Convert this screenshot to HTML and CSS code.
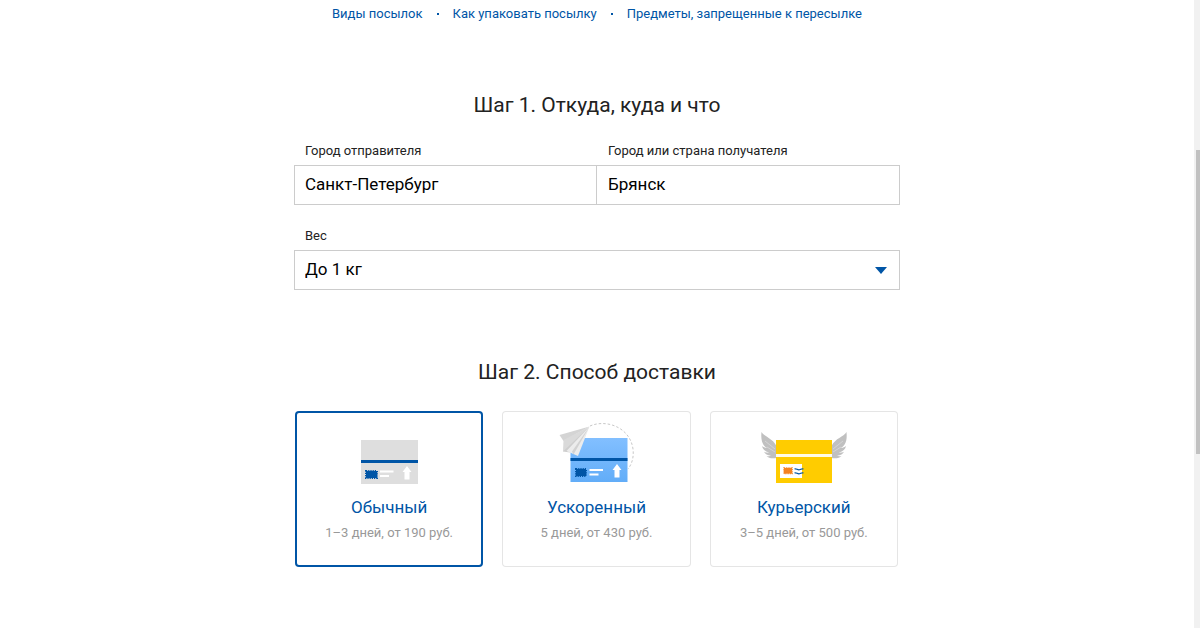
FILE: index.html
```html
<!DOCTYPE html>
<html lang="ru">
<head>
    <meta charset="UTF-8">
    <meta name="viewport" content="width=device-width, initial-scale=1.0">
    <title>Отправить посылку</title>
    <link rel="stylesheet" href="styles.css">
</head>
<body>
    <div class="page">
        <nav class="links">
            <a href="#types">Виды посылок</a>
            <span class="dot"></span>
            <a href="#packing">Как упаковать посылку</a>
            <span class="dot"></span>
            <a href="#forbidden">Предметы, запрещенные к пересылке</a>
        </nav>

        <form class="container">
            <h2>Шаг 1. Откуда, куда и что</h2>
            <div class="cities">
                <div class="field">
                    <label for="from">Город отправителя</label>
                    <input type="text" id="from" value="Санкт-Петербург">
                </div>
                <div class="field">
                    <label for="to">Город или страна получателя</label>
                    <input type="text" id="to" value="Брянск">
                </div>
            </div>
            <div class="field weight">
                <label for="weight">Вес</label>
                <div class="select-wrap">
                    <select id="weight">
                        <option>До 1 кг</option>
                    </select>
                    <svg class="caret" viewBox="0 0 12 7" width="12" height="7"><path d="M0 0h12L6 7z" fill="#0055a6"/></svg>
                </div>
            </div>

            <h2>Шаг 2. Способ доставки</h2>
            <div class="methods">
                <label class="method">
                    <input type="radio" name="method" checked>
                    <svg class="method-icon" viewBox="0 0 96 66">
                        <rect x="20" y="20" width="57" height="44" fill="#dedede"/>
                        <rect x="20" y="40" width="57" height="3" fill="#0055a6"/>
                        <rect x="25" y="51" width="11" height="7" fill="#0055a6"/>
                        <rect x="25" y="51" width="11" height="7" fill="none" stroke="#0055a6" stroke-width="2" stroke-dasharray="1.2 1"/>
                        <path d="M39 50.5h13.500v2H39zM39 55h9v2h-9z" fill="#fff"/>
                        <path d="M66 46l4.500 6H68.500v7.500h-5V52h-2z" fill="#fff"/>
                    </svg>
                    <span class="method-name">Обычный</span>
                    <span class="method-info">1–3 дней, от 190 руб.</span>
                </label>
                <label class="method">
                    <input type="radio" name="method">
                    <svg class="method-icon" viewBox="0 0 96 66">
                        <defs>
                            <linearGradient id="box" x1="0" y1="0" x2="0" y2="1">
                                <stop offset="0" stop-color="#82bfff"/>
                                <stop offset="1" stop-color="#62adf8"/>
                            </linearGradient>
                        </defs>
                        <path d="M42 6C58-1 82 7 85 29c1 8-1 15-5 20" fill="none" stroke="#c8c8c8" stroke-width="1" stroke-dasharray="2.500 2"/>
                        <rect x="22.500" y="18" width="57" height="44" fill="url(#box)"/>
                        <rect x="22.500" y="38" width="57" height="3" fill="#0055a6"/>
                        <rect x="28" y="49" width="10" height="7" fill="#0055a6"/>
                        <rect x="28" y="49" width="10" height="7" fill="none" stroke="#0055a6" stroke-width="2" stroke-dasharray="1.2 1"/>
                        <path d="M41.500 49H55v2H41.500zM41.500 53.500h9v2h-9z" fill="#fff"/>
                        <path d="M69 44l4.500 6h-2v7.500h-5V50h-2z" fill="#fff"/>
                        <path d="M41.500 6.500L11.500 15l4 6z" fill="#d4d4d4"/>
                        <path d="M41.500 6.500L15.500 20l-.5 11.500 7-1.500z" fill="#dadada"/>
                        <path d="M41.500 6.500L15 31.500l7 1z" fill="#cecece"/>
                        <path d="M41.500 6.500L18.500 31 30 36z" fill="#ececec"/>
                        <path d="M41.500 6.500L24 31.500l1.500 3z" fill="#d2d2d2"/>
                    </svg>
                    <span class="method-name">Ускоренный</span>
                    <span class="method-info">5 дней, от 430 руб.</span>
                </label>
                <label class="method">
                    <input type="radio" name="method">
                    <svg class="method-icon" viewBox="0 0 96 66">
                        <g id="wing" fill="#c0c0c0">
                            <path d="M5.500 12c3 5 11 6 15 14v12c-5 1-8-.2-10-2 2 .3 3.500.2 4.500-.2-3.500-.3-6-2-7-4 2 .8 4 1 5 .8-4-1-6.500-3.500-7-6.500 2 1.500 4 2 5 2-4-2.500-6.500-7-5.500-16.100z"/>
                            <path d="M9 21l10 8M11 27l8 5" fill="none" stroke="#dcdcdc" stroke-width=".7"/>
                        </g>
                        <use href="#wing" transform="matrix(-1 0 0 1 96 0)"/>
                        <rect x="20" y="20" width="56" height="43" fill="#fc0"/>
                        <rect x="20" y="34" width="56" height="3" fill="#fffbe6"/>
                        <rect x="24" y="44" width="22" height="14" fill="#fff"/>
                        <rect x="28" y="48" width="8" height="5.500" fill="#f58220"/>
                        <rect x="28" y="48" width="8" height="5.500" fill="none" stroke="#f58220" stroke-width="1.600" stroke-dasharray="1 .8"/>
                        <path d="M38.500 49c2-1 3 1.500 5 .8s2-1.300 4-.8M38.500 53c2-1 3 1.500 5 .8s2-1.300 4-.8" fill="none" stroke="#0055a6" stroke-width="1.200"/>
                    </svg>
                    <span class="method-name">Курьерский</span>
                    <span class="method-info">3–5 дней, от 500 руб.</span>
                </label>
            </div>
        </form>
    </div>
    <div class="scrollbar"><div class="thumb"></div></div>
</body>
</html>
```
FILE: styles.css
```css
* {
    margin: 0;
    padding: 0;
    box-sizing: border-box;
}

body {
    display: flex;
    min-height: 100vh;
    background: #fff;
    color: #222;
    font-family: Roboto, 'Liberation Sans', sans-serif;
}

.page {
    flex: 1;
    padding: 4px 20px 0;
}

.links {
    display: flex;
    justify-content: center;
    align-items: center;
    gap: 14px;
    margin-bottom: 67px;
    font-size: 13px;
    line-height: 20px;
}

.links a {
    color: #0055a6;
    text-decoration: none;
}

.dot {
    width: 2px;
    height: 2px;
    background: #0055a6;
}

.container {
    max-width: 606px;
    margin: 0 auto;
}

h2 {
    font-size: 21px;
    font-weight: 400;
    line-height: 28px;
    text-align: center;
}

.cities {
    display: flex;
    margin-top: 22px;
}

.field {
    flex: 1;
}

.field label {
    display: block;
    margin-bottom: 4px;
    padding-left: 11px;
    font-size: 13px;
    line-height: 20px;
}

.field input,
.field select {
    display: block;
    width: 100%;
    height: 40px;
    padding: 0 10px 2px;
    border: 1px solid #ccc;
    border-radius: 0;
    background: #fff;
    color: #000;
    font-family: inherit;
    font-size: 17px;
    appearance: none;
}

.cities .field + .field input {
    padding-left: 11px;
    border-left: none;
}

.weight {
    margin: 21px 0 68px;
}

.select-wrap {
    display: grid;
    align-items: center;
}

.select-wrap select,
.caret {
    grid-area: 1 / 1;
}

.caret {
    justify-self: end;
    margin-right: 13px;
    pointer-events: none;
}

.methods {
    display: grid;
    grid-template-columns: repeat(3, 1fr);
    gap: 19px;
    margin-top: 25px;
    padding: 0 2px 0 1px;
}

.method {
    display: flex;
    flex-direction: column;
    align-items: center;
    height: 156px;
    padding-top: 9px;
    border-radius: 4px;
    box-shadow: inset 0 0 0 1px #e5e5e5;
    cursor: pointer;
}

.method:has(input:checked) {
    box-shadow: inset 0 0 0 2px #0055a6;
}

.method input {
    appearance: none;
}

.method-icon {
    width: 96px;
    height: 66px;
}

.method-name {
    margin-top: 8px;
    font-size: 17px;
    line-height: 26px;
    color: #0055a6;
}

.method-info {
    margin-top: 3px;
    font-size: 13px;
    line-height: 20px;
    color: #999;
}

.scrollbar {
    width: 6px;
    padding: 150px 0 0 2px;
    background: #f1f1f1;
}

.thumb {
    height: 304px;
    background: #c1c1c1;
}
```
